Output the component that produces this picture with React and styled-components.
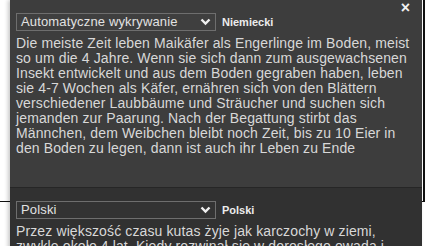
import React from 'react'
import styled, { createGlobalStyle } from 'styled-components'

const GlobalStyle = createGlobalStyle`
  html, body {
    margin: 0;
    padding: 0;
    background: #ffffff;
    overflow: hidden;
  }
  body {
    font-family: 'Liberation Sans', Arial, sans-serif;
  }
`

const PageUI = styled('div')`
  position: relative;
  width: 428px;
  height: 246px;
  overflow: hidden;
`

const BackdropBoxUI = styled('div')`
  width: 423px;
  height: 201px;
  border-right: 2px solid #111;
  border-bottom: 1px solid #111;
  box-sizing: content-box;
`

const PanelUI = styled('div')`
  position: absolute;
  top: 0;
  left: 10px;
  width: 412px;
  height: 260px;
  display: flex;
  flex-direction: column;
  box-shadow: -2px 0 4px rgba(0, 0, 0, 0.22);
`

const SectionUI = styled('div')`
  position: relative;
  display: flex;
  flex-direction: column;
  gap: 5px;
  padding: 13px 6px 0 6px;
  box-sizing: border-box;
  height: ${({ $height }) => ($height ? `${$height}px` : 'auto')};
  flex: ${({ $height }) => ($height ? 'none' : '1')};
  background: ${({ $dark }) => ($dark ? '#313131' : '#3d3d3d')};
  border-bottom: ${({ $dark }) => ($dark ? '0' : '1px solid #262626')};
`

const HeaderRowUI = styled('div')`
  display: flex;
  align-items: center;
  gap: 6px;
`

const SelectUI = styled('div')`
  display: flex;
  align-items: center;
  justify-content: space-between;
  width: 200px;
  height: 18px;
  padding: 0 4px 0 4px;
  box-sizing: border-box;
  border: 1px solid #6e6e6e;
  background: ${({ $dark }) => ($dark ? '#333' : '#3f3f3f')};
  color: #e2e2e2;
  font-size: 13px;
  letter-spacing: 0.15px;
  line-height: 16px;
`

const ChevronUI = styled('svg')`
  width: 11px;
  height: 8px;
  flex: none;
`

const LangLabelUI = styled('span')`
  font-size: 11px;
  font-weight: bold;
  color: #ececec;
`

const TextUI = styled('p')`
  margin: 0;
  padding-right: 6px;
  font-size: 14px;
  letter-spacing: 0.12px;
  line-height: 15px;
  color: #d8d8d8;
`

const CloseUI = styled('span')`
  position: absolute;
  top: 1px;
  right: 12px;
  font-size: 16px;
  font-weight: bold;
  line-height: 14px;
  color: #f2f2f2;
`

const Chevron = () => (
  <ChevronUI viewBox="0 0 11 8">
    <path d="M1.5 1.5 L5.5 5.5 L9.5 1.5" fill="none" stroke="#f0f0f0" strokeWidth="2.4" />
  </ChevronUI>
)

const Section = ({ source, label, text, dark, height, closable }) => (
  <SectionUI $dark={dark} $height={height}>
    {closable && <CloseUI>×</CloseUI>}
    <HeaderRowUI>
      <SelectUI $dark={dark}>
        <span>{source}</span>
        <Chevron />
      </SelectUI>
      <LangLabelUI>{label}</LangLabelUI>
    </HeaderRowUI>
    <TextUI>{text}</TextUI>
  </SectionUI>
)

export default function App() {
  return (
    <PageUI>
      <GlobalStyle />
      <BackdropBoxUI />
      <PanelUI>
        <Section
          closable
          height={188}
          source="Automatyczne wykrywanie"
          label="Niemiecki"
          text="Die meiste Zeit leben Maikäfer als Engerlinge im Boden, meist so um die 4 Jahre. Wenn sie sich dann zum ausgewachsenen Insekt entwickelt und aus dem Boden gegraben haben, leben sie 4-7 Wochen als Käfer, ernähren sich von den Blättern verschiedener Laubbäume und Sträucher und suchen sich jemanden zur Paarung. Nach der Begattung stirbt das Männchen, dem Weibchen bleibt noch Zeit, bis zu 10 Eier in den Boden zu legen, dann ist auch ihr Leben zu Ende"
        />
        <Section
          dark
          source="Polski"
          label="Polski"
          text="Przez większość czasu kutas żyje jak karczochy w ziemi, zwykle około 4 lat. Kiedy rozwinął się w dorosłego owada i wykopał się z ziemi, żyje 4-7 tygodni jako chrząszcz."
        />
      </PanelUI>
    </PageUI>
  )
}
